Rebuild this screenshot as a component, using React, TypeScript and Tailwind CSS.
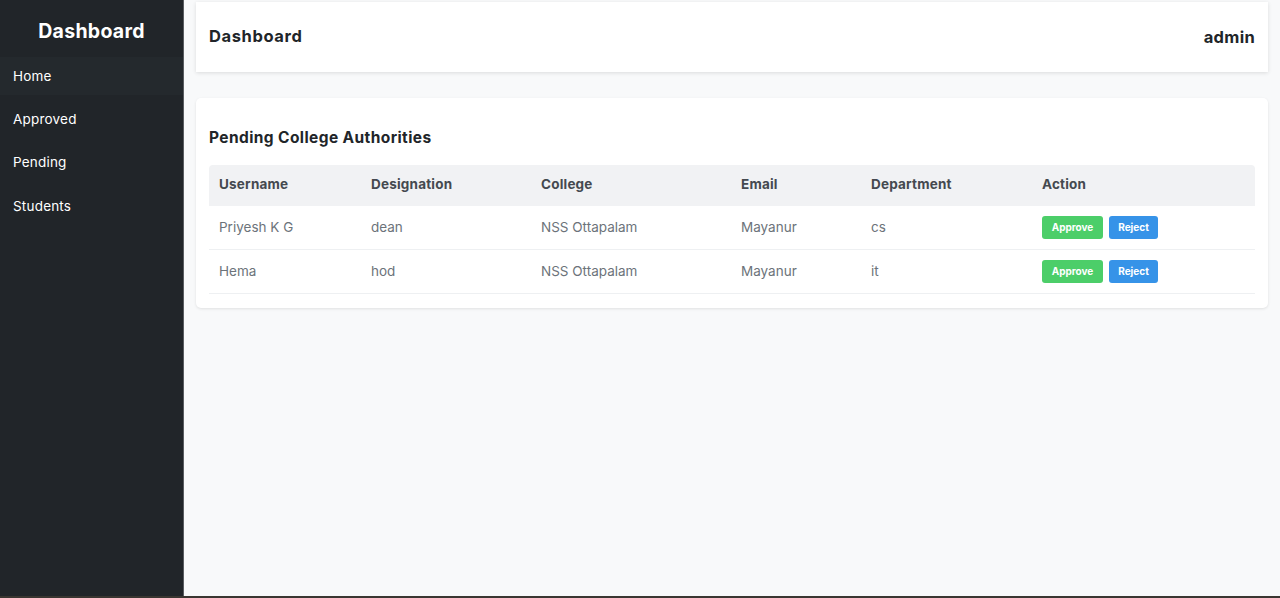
import React from "react";

const rows = [
    { username: "Priyesh K G", designation: "dean", college: "NSS Ottapalam", email: "Mayanur", department: "cs" },
    { username: "Hema", designation: "hod", college: "NSS Ottapalam", email: "Mayanur", department: "it" },
];

const navItems = ["Home", "Approved", "Pending", "Students"];

export default function App() {
    return (
        <div className="w-[1280px] h-[598px] flex flex-col font-['Inter','Open_Sans',sans-serif]">
            <div className="flex flex-1 min-h-0">
                {/* Sidebar */}
                <aside className="w-[184px] bg-[#212529] border-r border-[#5a5d61] flex flex-col">
                    <div className="h-[57px] flex items-center justify-center pt-[6px]">
                        <h1 className="text-white text-[19.5px] font-bold tracking-[0.3px]">Dashboard</h1>
                    </div>
                    <nav className="flex flex-col">
                        {navItems.map((item, i) => (
                            <a
                                key={item}
                                className={
                                    i === 0
                                        ? "h-[38px] flex items-center pl-[13px] text-white text-[13.5px] tracking-[0.2px] bg-[#24292d]"
                                        : "h-[43.5px] flex items-center pl-[13px] text-white text-[13.5px] tracking-[0.2px] " + (i === 1 ? "mt-[2px]" : "")
                                }
                            >
                                {item}
                            </a>
                        ))}
                    </nav>
                </aside>

                {/* Main */}
                <main className="flex-1 bg-[#f8f9fa] px-[12px] pt-[2px]">
                    <header className="h-[70px] bg-white shadow-[0_1px_4px_rgba(0,0,0,0.12)] flex items-center justify-between px-[13px]">
                        <h2 className="text-[16.5px] font-bold text-[#212529] tracking-[0.6px] mb-[2px]">Dashboard</h2>
                        <span className="text-[16.5px] font-bold text-[#212529] tracking-[0.3px]">admin</span>
                    </header>

                    <section className="mt-[26px] bg-white rounded-[5px] shadow-[0_1px_3px_rgba(0,0,0,0.1)] px-[13px] pt-[28px] pb-[14px]">
                        <h3 className="text-[15.5px] font-bold text-[#212529] tracking-[0.4px] mb-[16px]">Pending College Authorities</h3>
                        <table className="w-full table-fixed border-collapse text-[13.5px]">
                            <colgroup>
                                <col className="w-[152px]" />
                                <col className="w-[170px]" />
                                <col className="w-[200px]" />
                                <col className="w-[130px]" />
                                <col className="w-[171px]" />
                                <col />
                            </colgroup>
                            <thead>
                                <tr className="bg-[#f1f2f4] h-[41px] text-left text-[#44494f] tracking-[0.2px]">
                                    <th className="pl-[10px] pb-[3px] font-bold rounded-tl-[4px]">Username</th>
                                    <th className="pl-[10px] pb-[3px] font-bold">Designation</th>
                                    <th className="pl-[10px] pb-[3px] font-bold">College</th>
                                    <th className="pl-[10px] pb-[3px] font-bold">Email</th>
                                    <th className="pl-[10px] pb-[3px] font-bold">Department</th>
                                    <th className="pl-[10px] pb-[3px] font-bold rounded-tr-[4px]">Action</th>
                                </tr>
                            </thead>
                            <tbody>
                                {rows.map((r, i) => (
                                    <tr key={r.username} className={(i === 0 ? "h-[43px]" : "h-[44px]") + " border-b border-[#eef0f2] text-[#6c737a]"}>
                                        <td className="pl-[10px]">{r.username}</td>
                                        <td className="pl-[10px]">{r.designation}</td>
                                        <td className="pl-[10px]">{r.college}</td>
                                        <td className="pl-[10px]">{r.email}</td>
                                        <td className="pl-[10px]">{r.department}</td>
                                        <td className="pl-[10px]">
                                            <div className="flex gap-[6px]">
                                                <button className="w-[61px] h-[23px] rounded-[3px] bg-[#4cce69] text-white text-[10px] font-bold">
                                                    Approve
                                                </button>
                                                <button className="w-[49px] h-[23px] rounded-[3px] bg-[#3693e8] text-white text-[10px] font-bold">
                                                    Reject
                                                </button>
                                            </div>
                                        </td>
                                    </tr>
                                ))}
                            </tbody>
                        </table>
                    </section>
                </main>
            </div>
            <div className="h-[2px] bg-[#3a3631]" />
        </div>
    );
}
